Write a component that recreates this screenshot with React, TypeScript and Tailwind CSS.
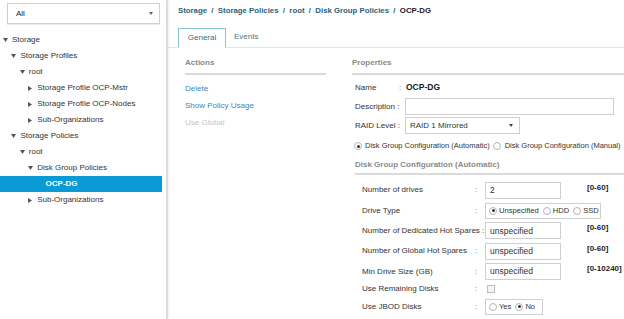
import React from 'react';

type Node = { level: number; caret: 'down' | 'right' | null; label: string; selected?: boolean };

const tree: Node[] = [
  { level: 0, caret: 'down', label: 'Storage' },
  { level: 1, caret: 'down', label: 'Storage Profiles' },
  { level: 2, caret: 'down', label: 'root' },
  { level: 3, caret: 'right', label: 'Storage Profile OCP-Mstr' },
  { level: 3, caret: 'right', label: 'Storage Profile OCP-Nodes' },
  { level: 3, caret: 'right', label: 'Sub-Organizations' },
  { level: 1, caret: 'down', label: 'Storage Policies' },
  { level: 2, caret: 'down', label: 'root' },
  { level: 3, caret: 'down', label: 'Disk Group Policies' },
  { level: 4, caret: null, label: 'OCP-DG', selected: true },
  { level: 3, caret: 'right', label: 'Sub-Organizations' },
];

function Caret({ dir }: { dir: 'down' | 'right' }) {
  return dir === 'down' ? (
    <svg width="5" height="4" viewBox="0 0 5 4">
      <path d="M0 0h5L2.5 4z" fill="#555" />
    </svg>
  ) : (
    <svg width="4" height="5" viewBox="0 0 4 5">
      <path d="M0 0l4 2.5L0 5z" fill="#555" />
    </svg>
  );
}

function Radio({ on }: { on?: boolean }) {
  return (
    <span className="inline-flex shrink-0 items-center justify-center w-[8px] h-[8px] rounded-full border border-[#b5b5b5] bg-white">
      {on && <span className="w-[3px] h-[3px] rounded-full bg-[#333]" />}
    </span>
  );
}

function FormRow({ label, colon = true, h, children, range }: { label: string; colon?: boolean; h: string; children: React.ReactNode; range?: string }) {
  return (
    <div className={`flex items-center ${h}`}>
      <div className="w-[120px] pl-[7px] whitespace-nowrap">{label}</div>
      <div className="w-[10px] text-[#666]">{colon ? ':' : ''}</div>
      {children}
      {range && <div className="ml-[26px] mb-[5px] font-bold text-[#222]">{range}</div>}
    </div>
  );
}

export default function App() {
  return (
    <div className="w-[624px] h-[319px] overflow-hidden bg-white flex font-['Liberation_Sans',Arial,sans-serif] text-[8px] text-[#333]">
      {/* left navigation */}
      <div className="w-[168px] shrink-0 border-r-2 border-[#dcdcdc] shadow-[1px_0_2px_rgba(0,0,0,0.06)]">
        <div className="pt-[3px] pl-[7px] pr-[6px]">
          <div className="h-[21px] border border-[#cfcfcf] shadow-[0_1px_1px_rgba(0,0,0,0.08)] flex items-center justify-between pl-[8px] pr-[6px]">
            <span className="text-[#222]">All</span>
            <svg width="4" height="3" viewBox="0 0 4 3">
              <path d="M0 0h4L2 3z" fill="#666" />
            </svg>
          </div>
        </div>
        <div className="mt-[8px] pr-[4px]">
          {tree.map((n, i) => (
            <div
              key={i}
              className={`h-[16px] flex items-center whitespace-nowrap ${n.selected ? 'bg-[#0a9ad6] text-white font-bold' : ''}`}
              style={{ paddingLeft: 3 + n.level * 8.4 }}
            >
              <span className="w-[9px] flex items-center">{n.caret && <Caret dir={n.caret} />}</span>
              <span>{n.label}</span>
            </div>
          ))}
        </div>
      </div>

      {/* main area */}
      <div className="flex-1 min-w-0">
        <div className="pl-[10px] h-[22px] flex items-center whitespace-nowrap font-bold text-[7.8px] text-[#2d6179]">
          Storage&nbsp;&nbsp;/&nbsp;&nbsp;Storage Policies&nbsp;&nbsp;/&nbsp;&nbsp;root&nbsp;&nbsp;/&nbsp;&nbsp;Disk Group Policies&nbsp;&nbsp;/&nbsp;&nbsp;
          <span className="text-[#1a1a1a]">OCP-DG</span>
        </div>
        <div className="mt-[6px] pl-[10px] h-[20px] border-b border-[#e4e4e4] flex items-end">
          <div className="w-[48px] h-[20px] -mb-px border border-[#86c4d4] border-b-white bg-white flex items-center justify-center text-[#3a6b80]">
            General
          </div>
          <div className="ml-[8px] h-[20px] flex items-center text-[#4a7a8e]">Events</div>
        </div>

        <div className="flex pl-[10px]">
          {/* actions */}
          <div className="ml-[7px] w-[141px] shrink-0">
            <div className="h-[27px] pb-[4px] flex items-end border-b-2 border-[#dadada] text-[#8a8a8a] font-bold">
              Actions
            </div>
            <div className="pt-[5px] text-[#3a88b8]">
              <div className="h-[17px] flex items-center">Delete</div>
              <div className="h-[17px] flex items-center">Show Policy Usage</div>
              <div className="h-[17px] flex items-center text-[#c4c4c4]">Use Global</div>
            </div>
          </div>

          {/* properties */}
          <div className="ml-[26px] flex-1 min-w-0">
            <div className="h-[27px] pb-[4px] flex items-end border-b-2 border-[#dadada] text-[#8a8a8a] font-bold">
              Properties
            </div>
            <div className="pt-[3px] pl-[3px]">
              <div className="h-[19px] flex items-center">
                <span className="w-[44px]">Name</span>
                <span className="w-[7px] text-[#666]">:</span>
                <span className="font-bold text-[#1a1a1a] text-[8.5px]">OCP-DG</span>
              </div>
              <div className="h-[19px] flex items-center">
                <span className="w-[50px] whitespace-nowrap">Description :</span>
                <div className="w-[209px] h-[17px] border border-[#cfcfcf]" />
              </div>
              <div className="h-[19px] flex items-center">
                <span className="w-[50px] whitespace-nowrap">RAID Level :</span>
                <div className="w-[115px] h-[17px] border border-[#cfcfcf] flex items-center justify-between pl-[4px] pr-[6px]">
                  <span>RAID 1 Mirrored</span>
                  <svg width="4" height="3" viewBox="0 0 4 3">
                    <path d="M0 0h4L2 3z" fill="#444" />
                  </svg>
                </div>
              </div>
              <div className="h-[22px] flex items-center whitespace-nowrap -ml-[1px] text-[7.5px]">
                <Radio on />
                <span className="ml-[3px]">Disk Group Configuration (Automatic)</span>
                <span className="ml-[3px] flex"><Radio /></span>
                <span className="ml-[4px]">Disk Group Configuration (Manual)</span>
              </div>
            </div>
            <div className="ml-[3px] h-[18px] flex items-center border-b-2 border-[#dadada] text-[#8a8a8a] font-bold">
              Disk Group Configuration (Automatic)
            </div>
            <div className="pt-[5px] pl-[3px]">
              <FormRow label="Number of drives" h="h-[20.4px]" range="[0-60]">
                <div className="w-[76px] h-[17px] border border-[#cfcfcf] flex items-center pl-[4px] text-[8.5px]">2</div>
              </FormRow>
              <FormRow label="Drive Type" h="h-[20.4px]">
                <div className="w-[116px] h-[16px] border border-[#cfcfcf] flex items-center pl-[3px] text-[7.6px]">
                  <Radio on />
                  <span className="ml-[2px]">Unspecified</span>
                  <span className="ml-[4px] flex"><Radio /></span>
                  <span className="ml-[2px]">HDD</span>
                  <span className="ml-[4px] flex"><Radio /></span>
                  <span className="ml-[2px]">SSD</span>
                </div>
              </FormRow>
              <div className="flex items-center h-[20.4px]">
                <div className="w-[130px] pl-[7px] whitespace-nowrap">Number of Dedicated Hot Spares :</div>
                <div className="w-[76px] h-[17px] border border-[#cfcfcf] flex items-center pl-[4px] text-[8.5px]">unspecified</div>
                <div className="ml-[26px] mb-[5px] font-bold text-[#222]">[0-60]</div>
              </div>
              <FormRow label="Number of Global Hot Spares" h="h-[20.4px]" range="[0-60]">
                <div className="w-[76px] h-[17px] border border-[#cfcfcf] flex items-center pl-[4px] text-[8.5px]">unspecified</div>
              </FormRow>
              <FormRow label="Min Drive Size (GB)" h="h-[20.4px]" range="[0-10240]">
                <div className="w-[76px] h-[17px] border border-[#cfcfcf] flex items-center pl-[4px] text-[8.5px]">unspecified</div>
              </FormRow>
              <FormRow label="Use Remaining Disks" h="h-[14px]">
                <div className="ml-[2px] w-[8px] h-[8px] border border-[#bdbdbd] bg-[#f4f4f4]" />
              </FormRow>
              <FormRow label="Use JBOD Disks" h="h-[22px]">
                <div className="w-[58px] h-[16px] border border-[#cfcfcf] flex items-center pl-[3px] text-[7.6px]">
                  <Radio />
                  <span className="ml-[2px]">Yes</span>
                  <span className="ml-[4px] flex"><Radio on /></span>
                  <span className="ml-[2px]">No</span>
                </div>
              </FormRow>
            </div>
          </div>
        </div>
      </div>
    </div>
  );
}
